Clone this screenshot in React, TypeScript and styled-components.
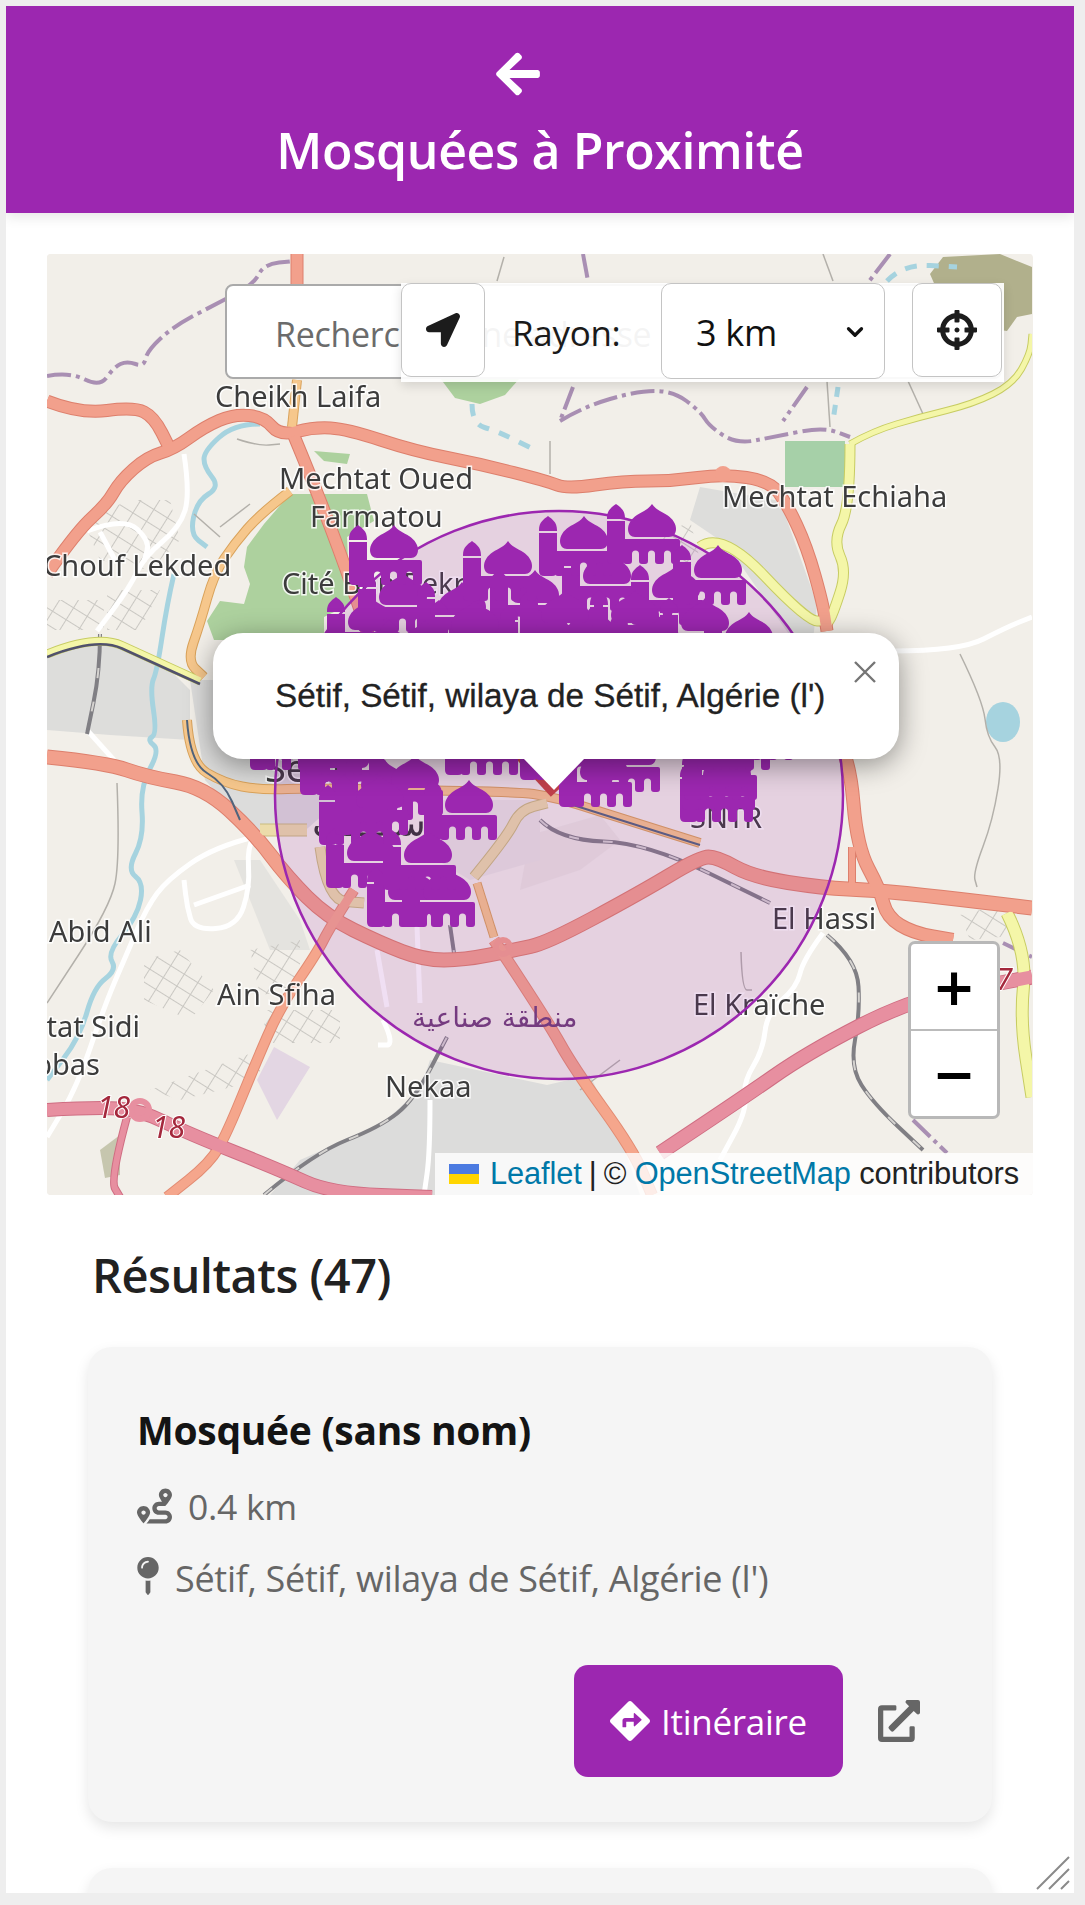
import React from 'react';
import styled, {createGlobalStyle} from "styled-components";
import {FaArrowLeft, FaCrosshairs, FaDirections, FaExternalLinkAlt, FaLocationArrow, FaMapPin, FaRoute} from "react-icons/fa";
import {LuChevronDown} from "react-icons/lu";

const GlobalStyle = createGlobalStyle`
  html, body {
    margin: 0;
    background: #eeeeee;
    font-family: "Open Sans", "Noto Sans", sans-serif;
  }
`

const Shell = styled.div`
  width: 1085px;
  height: 1905px;
  box-sizing: border-box;
  padding: 6px 11px 12px 6px;
  overflow: hidden;
`

const Panel = styled.div`
  position: relative;
  height: 100%;
  background: #fff;
  overflow: hidden;
`

const Header = styled.header`
  height: 207px;
  background: #9c27b0;
  color: #fff;
  box-shadow: 0 4px 12px rgba(0, 0, 0, 0.1);
  display: flex;
  flex-direction: column;
  align-items: center;
  padding-top: 43px;
  box-sizing: border-box;
`

const BackArrow = styled(FaArrowLeft)`
  margin-right: 44px;
`

const Title = styled.h1`
  margin: 19px 0 0;
  font-size: 50px;
  line-height: 64px;
  font-weight: 600;
  letter-spacing: -0.4px;
`

const Content = styled.main`
  padding: 41px 41px 0;
`

const MapFrame = styled.div`
  position: relative;
  height: 941px;
  overflow: hidden;
  border-radius: 4px;
  background: #f2efe9;
`

const MapCanvas = styled.svg`
  display: block;
  width: 985px;
  height: 941px;
  filter: blur(0.6px);
`

const PlaceLabel = styled.text`
  font-family: "Noto Sans", sans-serif;
  font-size: ${props => props.$size || 29}px;
  fill: #3c3c3c;
  stroke: rgba(255, 255, 255, 0.85);
  stroke-width: 3px;
  paint-order: stroke;
`

const RoadRef = styled.text`
  font-family: "Noto Sans", sans-serif;
  font-style: italic;
  font-size: 30px;
  fill: #a4283c;
  stroke: #fff;
  stroke-width: 2px;
  paint-order: stroke;
`

const ArabicLabel = styled.text`
  font-family: "DejaVu Sans", sans-serif;
  font-size: ${props => props.$size}px;
  fill: ${props => props.$color};
`

const SearchBar = styled.div`
  position: absolute;
  top: 30px;
  left: 178px;
  width: 777px;
  height: 96px;
`

const SearchInput = styled.div`
  box-sizing: border-box;
  width: 100%;
  height: 95px;
  padding: 0 48px;
  line-height: 96px;
  background: #fff;
  border: 2px solid #aaa;
  border-radius: 8px;
  font-size: 34px;
  letter-spacing: -0.3px;
  color: #6b6b6b;
  white-space: nowrap;
  overflow: hidden;
`

const SearchControls = styled.div`
  position: absolute;
  inset: -1px -2px -2px 176px;
  display: flex;
  align-items: flex-start;
  background: rgba(255, 255, 255, 0.93);
  box-shadow: 0 4px 10px rgba(0, 0, 0, 0.12);
`

const ControlButton = styled.button`
  width: ${props => props.$width}px;
  height: 94px;
  flex: none;
  padding: 0;
  display: flex;
  align-items: center;
  justify-content: center;
  background: #fff;
  border: 1.5px solid #c4c4c4;
  border-radius: 10px;
  color: #1c1c1c;
`

const RadiusLabel = styled.span`
  width: 176px;
  flex: none;
  padding-left: 27px;
  box-sizing: border-box;
  line-height: 100px;
  font-size: 35px;
  letter-spacing: -0.3px;
  color: #1a1a1a;
  white-space: nowrap;
`

const RadiusSelect = styled.div`
  box-sizing: border-box;
  width: 224px;
  height: 96px;
  flex: none;
  padding: 2px 16px 0 34px;
  display: flex;
  align-items: center;
  justify-content: space-between;
  background: #fff;
  border: 1.5px solid #c4c4c4;
  border-radius: 10px;
  font-size: 36px;
  letter-spacing: -0.3px;
  color: #111;
  margin-right: 27px;
`

const ZoomControl = styled.div`
  position: absolute;
  top: 687px;
  right: 33px;
  width: 92px;
  box-sizing: border-box;
  border: 3px solid rgba(0, 0, 0, 0.28);
  border-radius: 7px;
  background: #fff;
`

const ZoomButton = styled.div`
  height: 85px;
  display: flex;
  align-items: center;
  justify-content: center;
  border-bottom: ${props => props.$last ? 'none' : '2px solid #bbb'};
  font-family: "DejaVu Sans", sans-serif;
  font-weight: 700;
  font-size: 52px;
  color: #000;
`

const Attribution = styled.div`
  position: absolute;
  right: 0;
  bottom: 0;
  height: 42px;
  padding: 0 14px;
  display: flex;
  align-items: center;
  gap: 7px;
  background: rgba(255, 255, 255, 0.8);
  font-family: "Liberation Sans", sans-serif;
  font-size: 30.8px;
  letter-spacing: -0.1px;
  color: #222;
  white-space: nowrap;
`

const AttributionLink = styled.span`
  color: #0078a8;
`

const FlagIcon = styled.svg`
  width: 30px;
  height: 20px;
  margin-right: 4px;
`

const Popup = styled.div`
  position: absolute;
  top: 379px;
  left: 166px;
  width: 686px;
  height: 126px;
  box-sizing: border-box;
  padding-left: 62px;
  background: #fff;
  border-radius: 30px;
  box-shadow: 0 6px 28px rgba(0, 0, 0, 0.4);
  display: flex;
  align-items: center;
  font-family: "Liberation Sans", sans-serif;
  font-size: 27.5px;
  letter-spacing: 0;
  color: #222;
  white-space: nowrap;
`

const PopupText = styled.span`
  font-size: 33.3px;
  -webkit-text-stroke: 0.3px #222;
`

const PopupClose = styled.span`
  position: absolute;
  top: 26px;
  right: 21px;
  display: flex;
  color: #757575;
`

const PopupTip = styled.div`
  position: absolute;
  top: 505px;
  left: 477px;
  width: 60px;
  height: 31px;
  background: #fff;
  clip-path: polygon(0 0, 100% 0, 50% 100%);
`

const Results = styled.section`
  padding: 0 41px;
`

const ResultsTitle = styled.h2`
  margin: 55px 0 0;
  padding-left: 4px;
  font-size: 47px;
  line-height: 50px;
  font-weight: 600;
  letter-spacing: -0.5px;
  color: #212121;
`

const Card = styled.article`
  height: 475px;
  margin-top: ${props => props.$first ? '47px' : '46px'};
  box-sizing: border-box;
  padding: 58px 51px 0 51px;
  background: #f5f5f5;
  border-radius: 24px;
  box-shadow: 0 6px 14px rgba(0, 0, 0, 0.1);
`

const CardName = styled.h3`
  margin: 0 0 0 -2px;
  font-size: 39px;
  line-height: 50px;
  font-weight: 700;
  letter-spacing: -0.3px;
  color: #141414;
`

const InfoRow = styled.div`
  display: flex;
  align-items: center;
  gap: 16px;
  margin-top: ${props => props.$top}px;
  font-size: ${props => props.$size}px;
  line-height: 46px;
  color: #666;
  letter-spacing: -0.3px;
  white-space: nowrap;
`

const RouteIcon = styled(FaRoute)`
  width: 35px;
  height: 38px;
  margin-left: -2px;
`

const PinIcon = styled(FaMapPin)`
  width: 22px;
  height: 38px;
  margin-left: -2px;
  margin-top: -6px;
`

const CardActions = styled.div`
  display: flex;
  align-items: center;
  justify-content: flex-end;
  gap: 35px;
  margin-top: 63px;
  padding-right: 21px;
`

const RouteButton = styled.button`
  width: 269px;
  height: 112px;
  display: flex;
  align-items: center;
  justify-content: center;
  gap: 11px;
  background: #9c27b0;
  border: none;
  border-radius: 14px;
  color: #fff;
  font-family: inherit;
  font-size: 35px;
  letter-spacing: -0.3px;
`

const ExternalLink = styled.span`
  display: flex;
  color: #666;
`

const ResizeGrip = styled.svg`
  position: absolute;
  right: 3px;
  bottom: 2px;
  width: 36px;
  height: 36px;
`

const toPath = (p: number[][]) => {
    let d = `M${p[0][0]} ${p[0][1]}`;
    for (let i = 1; i < p.length - 1; i++) {
        const mx = (p[i][0] + p[i + 1][0]) / 2;
        const my = (p[i][1] + p[i + 1][1]) / 2;
        d += ` Q${p[i][0]} ${p[i][1]} ${mx} ${my}`;
    }
    const last = p[p.length - 1];
    return `${d} L${last[0]} ${last[1]}`;
};

const TRUNK = '#f2a08c';
const CASING = '#dd7f6c';
const PINK = '#e78fa0';
const PINK_CASE = '#cf6d82';
const ORANGE = '#f6c78c';
const ORANGE_CASE = '#d9a25a';
const YELLOW = '#f4f6a8';
const YELLOW_CASE = '#c7cc62';
const BOUNDARY = '#a98fb3';
const THIN = '#b3b0aa';
const RIVER = '#a6d3df';

const LAND = [
    {fill: '#add19e', points: '290,494 367,494 374,521 347,537 350,604 324,617 324,640 214,640 207,621 220,601 244,604 250,584 244,567 247,547 264,524'},
    {fill: '#add19e', points: '314,451 350,454 347,464 324,461'},
    {fill: '#add19e', points: '440,378 520,378 505,395 480,404 455,398'},
    {fill: '#a6d0a8', points: '785,441 845,441 845,487 785,487'},
    {fill: '#b1b08c', points: '930,274 943,257 1000,254 1032,267 1032,314 1017,317 1007,331 973,326 940,297'},
    {fill: '#dddddb', points: '700,487 780,501 817,604 813,640 793,640 727,545 690,520'},
    {fill: '#dddddb', points: '47,650 110,640 160,660 190,690 190,740 110,735 47,730'},
    {fill: '#dcdcdb', points: '190,680 330,680 340,800 300,835 250,830 205,780'},
    {fill: '#e4e3df', points: '234,860 260,860 300,920 310,950 270,950'},
    {fill: '#dcdcdb', points: '430,1060 547,1085 590,1075 625,1150 640,1195 270,1195 300,1160 380,1125 420,1090'},
    {fill: '#e3d6e3', points: '274,1047 310,1067 277,1120 257,1080'},
    {fill: '#c6c6ae', points: '100,1150 120,1135 120,1175 105,1178'},
    {fill: '#ebe7e1', points: '530,835 600,815 620,840 580,870 520,890'},
    {fill: '#e9e6e2', points: '440,800 540,800 540,860 470,880 420,850'},
];

const RESIDENTIAL = [
    '144,960 180,950 214,990 190,1020 144,1000',
    '260,1010 340,1010 340,1043 270,1043',
    '150,1090 260,1050 260,1080 180,1100',
    '47,600 104,600 104,630 47,630',
    '107,590 160,590 140,630 107,630',
    '83,520 130,500 170,500 180,540 150,570 100,560',
    '660,540 690,520 700,560 680,570',
    '960,915 1000,905 1020,935 970,940',
    '250,950 300,940 300,990 260,995',
];

const RIVERS = [
    [[260,424],[234,424],[204,451],[204,467],[220,487],[197,501],[190,534],[207,547]],
    [[174,574],[167,604],[157,671],[150,687],[157,734],[147,740],[160,750],[140,787],[144,837],[127,870],[144,883],[137,917],[107,953],[117,970],[94,987],[80,1037],[47,1080]],
];

const THIN_LINES = [
    [[237,439],[258,446],[280,444]],
    [[194,514],[220,537]],
    [[220,527],[250,504]],
    [[117,783],[120,860],[110,907],[47,1003]],
    [[550,441],[550,474]],
    [[827,381],[830,427]],
    [[908,381],[923,414]],
    [[504,257],[497,281]],
    [[823,254],[833,281]],
    [[960,654],[983,701],[987,737],[1003,757],[993,820],[973,873],[977,887]],
    [[741,952],[742,990],[752,990]],
    [[620,1060],[580,1090]],
];

const BOUNDARIES = [
    [[47,376],[70,372],[100,387],[114,367],[127,361],[144,367],[147,351],[174,326],[220,302],[254,284],[264,264],[294,261]],
    [[560,421],[583,407],[637,391],[673,391],[700,411],[710,427],[737,444],[773,437],[823,427],[850,437]],
    [[583,254],[588,281]],
    [[890,254],[867,284]],
    [[573,387],[560,421]],
    [[807,387],[783,421]],
    [[1003,943],[1032,957]],
    [[913,1120],[947,1153]],
];

const WHITE_ROADS = [
    [[184,454],[190,494],[180,527],[144,557],[130,587],[97,631]],
    [[87,531],[124,517],[150,541],[144,561]],
    [[100,532],[115,560]],
    [[87,730],[114,760]],
    [[254,837],[214,847],[167,880],[147,907],[127,953],[104,1007],[77,1087],[47,1137]],
    [[254,837],[247,847],[250,887],[237,927],[194,930],[187,907],[184,880]],
    [[194,905],[250,885]],
    [[430,1100],[430,1153],[424,1195]],
    [[417,927],[420,1003]],
    [[377,950],[387,1007]],
    [[823,933],[803,960],[797,987],[767,1013],[763,1050],[743,1083],[747,1110],[720,1160]],
    [[893,651],[960,651],[1007,627],[1032,617]],
    [[383,1020],[395,1045],[378,1045]],
];

const RAILS = [
    [[100,634],[100,671],[87,734]],
    [[540,820],[560,840],[647,843],[770,903]],
    [[827,935],[857,960],[860,1013],[850,1067],[873,1103],[923,1150]],
    [[264,1195],[314,1153],[380,1127],[414,1100],[447,1037]],
    [[455,960],[450,925]],
];

const ROADS = [
    {color: ORANGE, casing: ORANGE_CASE, width: 8, points: [[297,380],[292,427]]},
    {color: ORANGE, casing: ORANGE_CASE, width: 8, points: [[290,491],[260,514],[234,544],[214,574],[200,624],[187,661],[204,677]]},
    {color: ORANGE, casing: ORANGE_CASE, width: 8, points: [[187,720],[190,763],[224,783],[260,790],[314,788],[400,790],[520,792],[547,796],[573,803],[617,817],[700,843]]},
    {color: '#ecdcaa', casing: '#c9bc7e', width: 11, points: [[260,830],[307,830]]},
    {color: '#ecdcaa', casing: '#c9bc7e', width: 9, points: [[320,847],[327,900],[364,903]]},
    {color: '#ecdcaa', casing: '#c9bc7e', width: 9, points: [[474,877],[507,837],[520,810],[547,803]]},
    {color: ORANGE, casing: ORANGE_CASE, width: 7, points: [[477,883],[494,937]]},
    {color: YELLOW, casing: YELLOW_CASE, width: 7, points: [[47,654],[97,634],[147,657],[200,681]]},
    {color: YELLOW, casing: YELLOW_CASE, width: 9, points: [[850,444],[850,507],[833,541],[847,571],[833,614],[827,624]]},
    {color: YELLOW, casing: YELLOW_CASE, width: 9, points: [[700,547],[722,531],[807,621],[827,621]]},
    {color: YELLOW, casing: YELLOW_CASE, width: 5, points: [[850,444],[873,431],[920,417],[973,404],[1013,384],[1030,354],[1032,334]]},
    {color: YELLOW, casing: YELLOW_CASE, width: 11, points: [[1007,913],[1027,953],[1020,1020],[1032,1097]]},
    {color: TRUNK, casing: CASING, width: 11, points: [[297,254],[297,290]]},
    {color: TRUNK, casing: CASING, width: 11, points: [[47,401],[80,414],[134,407],[154,417],[170,449]]},
    {color: TRUNK, casing: CASING, width: 11, points: [[47,574],[77,531],[107,504],[120,481],[147,457],[174,449],[204,427],[234,414],[264,417],[280,436],[314,427],[347,429],[414,451],[480,464],[547,481],[567,489],[623,481],[673,481],[723,474],[770,481],[787,504],[807,547],[823,604],[827,631]]},
    {color: TRUNK, casing: CASING, width: 11, points: [[294,436],[314,484],[347,571],[370,640]]},
    {color: TRUNK, casing: CASING, width: 13, points: [[47,757],[107,763],[147,777],[204,787],[254,833],[287,877],[327,917],[380,943],[424,960],[464,960],[514,950],[547,943],[640,893],[700,857],[717,857],[753,877],[823,888],[873,890],[940,897],[1032,908]]},
    {color: TRUNK, casing: CASING, width: 12, points: [[838,740],[850,760],[857,847],[880,890],[887,917],[913,933],[953,940]]},
    {color: TRUNK, casing: CASING, width: 6, points: [[852,847],[852,890]]},
    {color: '#f5a68c', casing: '#e28b72', width: 9, points: [[354,890],[330,927],[317,953],[280,1007],[254,1067],[227,1133],[210,1163],[167,1197]]},
    {color: '#f5a68c', casing: '#e28b72', width: 10, points: [[494,940],[547,1020],[573,1067],[633,1150],[652,1195]]},
    {color: PINK, casing: PINK_CASE, width: 12, points: [[47,1110],[97,1107],[140,1110],[187,1133],[280,1170],[330,1193],[432,1197]]},
    {color: PINK, casing: PINK_CASE, width: 6, points: [[127,1117],[110,1180],[120,1197]]},
    {color: PINK, casing: PINK_CASE, width: 13, points: [[660,1153],[740,1100],[807,1053],[910,1000],[1000,983],[1032,977]]},
];

const MOSQUES = [
    [327,597],[358,572],[417,582],[490,570],[562,551],[631,565],[546,607],[704,612],[380,620],[450,620],[610,612],
    [430,600],[500,605],[590,590],[520,590],[660,598],
    [349,525],[463,541],[539,516],[607,504],[673,545],
    [250,710],[445,715],[340,760],[370,755],[300,735],[305,715],[520,720],
    [424,780],[319,785],[326,828],[367,867],[402,867],[383,830],[335,775],
    [559,747],[587,732],[680,762],[682,750],[684,740],[697,710],[720,700],
];

const PLACES = [
    {x: 215, y: 407, name: 'Cheikh Laifa'},
    {x: 279, y: 489, name: 'Mechtat Oued'},
    {x: 310, y: 527, name: 'Farmatou'},
    {x: 43, y: 576, name: 'Chouf Lekded'},
    {x: 282, y: 594, name: 'Cité Ben Bekri'},
    {x: 722, y: 507, name: 'Mechtat Echiaha'},
    {x: 49, y: 942, name: 'Abid Ali'},
    {x: 217, y: 1005, name: 'Ain Sfiha'},
    {x: 385, y: 1097, name: 'Nekaa'},
    {x: 772, y: 929, name: 'El Hassi'},
    {x: 693, y: 1015, name: 'El Kraïche'},
    {x: 690, y: 828, name: 'SNTR'},
];

const PlacesLayer = () => (
    <g>
        {PLACES.map(place => <PlaceLabel key={place.name} x={place.x} y={place.y}>{place.name}</PlaceLabel>)}
        <PlaceLabel x={140} y={1037} textAnchor="end">Mechtat Sidi</PlaceLabel>
        <PlaceLabel x={100} y={1075} textAnchor="end">Abbas</PlaceLabel>
        <PlaceLabel x={265} y={782} $size={38}>Sétif</PlaceLabel>
        <ArabicLabel x={412} y={1027} $size={28} $color="#6f3f78">منطقة صناعية</ArabicLabel>
        <ArabicLabel x={312} y={836} $size={38} $color="#333">سطيف</ArabicLabel>
        <RoadRef x={97} y={1118}>18</RoadRef>
        <RoadRef x={152} y={1138}>18</RoadRef>
        <RoadRef x={996} y={990}>7</RoadRef>
    </g>
);

const MapDrawing = () => (
    <MapCanvas viewBox="47 254 985 941">
        <defs>
            <pattern id="blocks" width="16" height="14" patternUnits="userSpaceOnUse" patternTransform="rotate(32)">
                <path d="M0 0H16M0 0V14" stroke="#c9c7c2" strokeWidth="2" fill="none"/>
            </pattern>
            <symbol id="mosque" viewBox="0 0 73 60" overflow="visible">
                <path fill="#9c27b0" d="M0 14C0 6 5 3 9 0 13 3 18 6 18 14V15H0Z"/>
                <path fill="#9c27b0" d="M0 17H18V55Q18 60 13 60H5Q0 60 0 55Z"/>
                <path fill="#9c27b0" d="M45 0C48 5 55 8 60 11 66 15 69 20 69 25 69 30 66 33 62 33H28C24 33 21 30 21 25 21 20 24 15 30 11 35 8 42 5 45 0Z"/>
                <path fill="#9c27b0" d="M18 35H71Q73 35 73 37V57Q73 60 70 60H67Q64 60 64 57V50A3.5 3.5 0 0 0 57 50V57Q57 60 54 60H51Q48 60 48 57V50A3.5 3.5 0 0 0 41 50V57Q41 60 38 60H35Q32 60 32 57V50A3.5 3.5 0 0 0 25 50V57Q25 60 22 60H19Q16 60 16 57V37Q16 35 18 35Z"/>
            </symbol>
        </defs>
        <rect x="47" y="254" width="985" height="941" fill="#f2efe9"/>
        {LAND.map(area => <polygon key={area.points} points={area.points} fill={area.fill}/>)}
        {RESIDENTIAL.map(area => <polygon key={area} points={area} fill="url(#blocks)"/>)}
        <ellipse cx="1003" cy="722" rx="17" ry="20" fill={RIVER}/>
        {RIVERS.map((river, i) => <path key={i} d={toPath(river)} fill="none" stroke={RIVER} strokeWidth="5"/>)}
        <path d={toPath([[472,404],[472,424],[497,431],[537,451]])} fill="none" stroke={RIVER} strokeWidth="5" strokeDasharray="12 10"/>
        <path d={toPath([[887,281],[903,264],[957,267]])} fill="none" stroke={RIVER} strokeWidth="5" strokeDasharray="12 10"/>
        <path d={toPath([[838,387],[833,421]])} fill="none" stroke={RIVER} strokeWidth="5" strokeDasharray="10 8"/>
        {THIN_LINES.map((line, i) => <path key={i} d={toPath(line)} fill="none" stroke={THIN} strokeWidth="1.5"/>)}
        {BOUNDARIES.map((line, i) => <path key={i} d={toPath(line)} fill="none" stroke={BOUNDARY} strokeWidth="4" strokeDasharray="24 5 4 5"/>)}
        {WHITE_ROADS.map((line, i) => <path key={i} d={toPath(line)} fill="none" stroke="#fff" strokeWidth="5" strokeLinejoin="round"/>)}
        {RAILS.map((line, i) => <path key={i} d={toPath(line)} fill="none" stroke="#807f84" strokeWidth="4"/>)}
        {RAILS.map((line, i) => <path key={i} d={toPath(line)} fill="none" stroke="#d5d3d0" strokeWidth="2" strokeDasharray="10 24"/>)}
        {ROADS.map((road, i) => <path key={i} d={toPath(road.points)} fill="none" stroke={road.casing} strokeWidth={road.width + 2} strokeLinejoin="round"/>)}
        {ROADS.map((road, i) => <path key={i} d={toPath(road.points)} fill="none" stroke={road.color} strokeWidth={road.width} strokeLinejoin="round"/>)}
        <circle cx="140" cy="1110" r="9" fill="none" stroke={PINK} strokeWidth="6"/>
        <circle cx="723" cy="474" r="8" fill={TRUNK}/>
        <circle cx="503" cy="947" r="7" fill="none" stroke={TRUNK} strokeWidth="6"/>
        <path d={toPath([[47,657],[97,637],[147,660],[200,684]])} fill="none" stroke="#51516c" strokeWidth="2.5"/>
        <path d={toPath([[187,720],[190,763],[224,783],[240,820]])} fill="none" stroke="#51647c" strokeWidth="2"/>
        <path d={toPath([[573,805],[617,819],[700,845]])} fill="none" stroke="#51647c" strokeWidth="2"/>
        <path d="M522 755 L556 792" stroke="#c6453a" strokeWidth="14"/>
        <PlacesLayer/>
        <circle cx="559" cy="795" r="284" fill="#9c27b0" fillOpacity="0.15" stroke="#9c27b0" strokeWidth="2.5"/>
        {MOSQUES.map(([x, y], i) => <use key={i} href="#mosque" x={x} y={y} width="73" height="60"/>)}
    </MapCanvas>
);

const App: React.FC = () => {
    return (
        <Shell>
            <GlobalStyle/>
            <Panel>
                <Header>
                    <BackArrow size={50}/>
                    <Title>Mosquées à Proximité</Title>
                </Header>
                <Content>
                    <MapFrame>
                        <MapDrawing/>
                        <SearchBar>
                            <SearchInput>Rechercher une adresse</SearchInput>
                            <SearchControls>
                                <ControlButton $width={84}><FaLocationArrow size={34}/></ControlButton>
                                <RadiusLabel>Rayon:</RadiusLabel>
                                <RadiusSelect>3 km<LuChevronDown size={26} strokeWidth={3}/></RadiusSelect>
                                <ControlButton $width={90}><FaCrosshairs size={40}/></ControlButton>
                            </SearchControls>
                        </SearchBar>
                        <ZoomControl>
                            <ZoomButton>+</ZoomButton>
                            <ZoomButton $last>−</ZoomButton>
                        </ZoomControl>
                        <Popup>
                            <PopupText>Sétif, Sétif, wilaya de Sétif, Algérie (l')</PopupText>
                            <PopupClose>
                                <svg width="26" height="26" viewBox="0 0 26 26"><path d="M3 3L23 23M23 3L3 23" stroke="currentColor" strokeWidth="2.4"/></svg>
                            </PopupClose>
                        </Popup>
                        <PopupTip/>
                        <Attribution>
                            <FlagIcon viewBox="0 0 12 8"><path fill="#4C7BE1" d="M0 0h12v4H0z"/><path fill="#FFD500" d="M0 4h12v4H0z"/></FlagIcon>
                            <AttributionLink>Leaflet</AttributionLink>
                            <span>|</span>
                            <span>© <AttributionLink>OpenStreetMap</AttributionLink> contributors</span>
                        </Attribution>
                    </MapFrame>
                    <Results>
                        <ResultsTitle>Résultats (47)</ResultsTitle>
                        <Card $first>
                            <CardName>Mosquée (sans nom)</CardName>
                            <InfoRow $top={28} $size={35.5}>
                                <RouteIcon/>
                                0.4 km
                            </InfoRow>
                            <InfoRow $top={27} $size={36}>
                                <PinIcon/>
                                Sétif, Sétif, wilaya de Sétif, Algérie (l')
                            </InfoRow>
                            <CardActions>
                                <RouteButton><FaDirections size={40}/>Itinéraire</RouteButton>
                                <ExternalLink><FaExternalLinkAlt size={42}/></ExternalLink>
                            </CardActions>
                        </Card>
                        <Card/>
                    </Results>
                </Content>
                <ResizeGrip viewBox="0 0 36 36">
                    <path d="M2 34L34 2M14 34L34 14M26 34L34 26" stroke="#8a8a8a" strokeWidth="2" fill="none"/>
                </ResizeGrip>
            </Panel>
        </Shell>
    );
}

export default App;
